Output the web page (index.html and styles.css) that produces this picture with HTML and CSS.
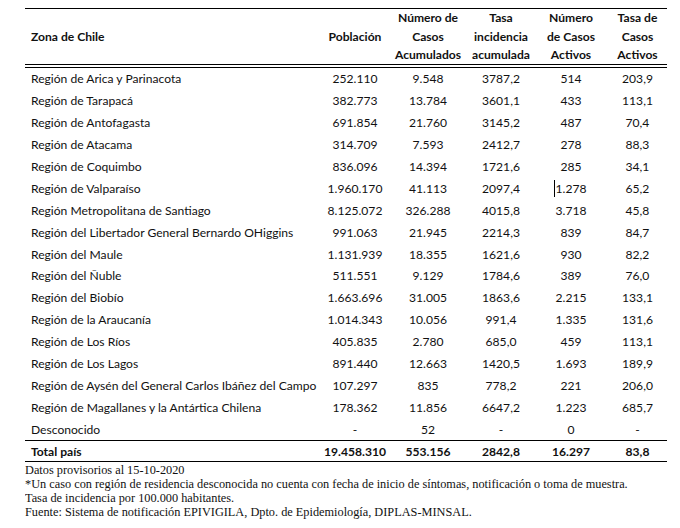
FILE: index.html
```html
<!DOCTYPE html>
<html lang="es">
<head>
<meta charset="utf-8">
<title>Casos por región</title>
<link rel="stylesheet" href="styles.css">
</head>
<body>
<div class="wrap">
  <div class="table">
    <div class="row head">
      <div class="c name">Zona de Chile</div>
      <div class="c">Población</div>
      <div class="c">Número de<br>Casos<br>Acumulados</div>
      <div class="c">Tasa<br>incidencia<br>acumulada</div>
      <div class="c">Número<br>de Casos<br>Activos</div>
      <div class="c">Tasa de<br>Casos<br>Activos</div>
    </div>
    <div class="body">
      <div class="row"><div class="c name">Región de Arica y Parinacota</div><div class="c">252.110</div><div class="c">9.548</div><div class="c">3787,2</div><div class="c">514</div><div class="c">203,9</div></div>
      <div class="row"><div class="c name">Región de Tarapacá</div><div class="c">382.773</div><div class="c">13.784</div><div class="c">3601,1</div><div class="c">433</div><div class="c">113,1</div></div>
      <div class="row"><div class="c name">Región de Antofagasta</div><div class="c">691.854</div><div class="c">21.760</div><div class="c">3145,2</div><div class="c">487</div><div class="c">70,4</div></div>
      <div class="row"><div class="c name">Región de Atacama</div><div class="c">314.709</div><div class="c">7.593</div><div class="c">2412,7</div><div class="c">278</div><div class="c">88,3</div></div>
      <div class="row"><div class="c name">Región de Coquimbo</div><div class="c">836.096</div><div class="c">14.394</div><div class="c">1721,6</div><div class="c">285</div><div class="c">34,1</div></div>
      <div class="row"><div class="c name">Región de Valparaíso</div><div class="c">1.960.170</div><div class="c">41.113</div><div class="c">2097,4</div><div class="c"><span class="caret">1.278</span></div><div class="c">65,2</div></div>
      <div class="row"><div class="c name">Región Metropolitana de Santiago</div><div class="c">8.125.072</div><div class="c">326.288</div><div class="c">4015,8</div><div class="c">3.718</div><div class="c">45,8</div></div>
      <div class="row"><div class="c name">Región del Libertador General Bernardo OHiggins</div><div class="c">991.063</div><div class="c">21.945</div><div class="c">2214,3</div><div class="c">839</div><div class="c">84,7</div></div>
      <div class="row"><div class="c name">Región del Maule</div><div class="c">1.131.939</div><div class="c">18.355</div><div class="c">1621,6</div><div class="c">930</div><div class="c">82,2</div></div>
      <div class="row"><div class="c name">Región del Ñuble</div><div class="c">511.551</div><div class="c">9.129</div><div class="c">1784,6</div><div class="c">389</div><div class="c">76,0</div></div>
      <div class="row"><div class="c name">Región del Biobío</div><div class="c">1.663.696</div><div class="c">31.005</div><div class="c">1863,6</div><div class="c">2.215</div><div class="c">133,1</div></div>
      <div class="row"><div class="c name">Región de la Araucanía</div><div class="c">1.014.343</div><div class="c">10.056</div><div class="c">991,4</div><div class="c">1.335</div><div class="c">131,6</div></div>
      <div class="row"><div class="c name">Región de Los Ríos</div><div class="c">405.835</div><div class="c">2.780</div><div class="c">685,0</div><div class="c">459</div><div class="c">113,1</div></div>
      <div class="row"><div class="c name">Región de Los Lagos</div><div class="c">891.440</div><div class="c">12.663</div><div class="c">1420,5</div><div class="c">1.693</div><div class="c">189,9</div></div>
      <div class="row"><div class="c name">Región de Aysén del General Carlos Ibáñez del Campo</div><div class="c">107.297</div><div class="c">835</div><div class="c">778,2</div><div class="c">221</div><div class="c">206,0</div></div>
      <div class="row"><div class="c name">Región de Magallanes y la Antártica Chilena</div><div class="c">178.362</div><div class="c">11.856</div><div class="c">6647,2</div><div class="c">1.223</div><div class="c">685,7</div></div>
      <div class="row"><div class="c name">Desconocido</div><div class="c">-</div><div class="c">52</div><div class="c">-</div><div class="c">0</div><div class="c">-</div></div>
    </div>
    <div class="row total">
      <div class="c name">Total país</div><div class="c">19.458.310</div><div class="c">553.156</div><div class="c">2842,8</div><div class="c">16.297</div><div class="c">83,8</div>
    </div>
  </div>
  <div class="notes">
    <p>Datos provisorios al 15-10-2020</p>
    <p>*Un caso con región de residencia desconocida no cuenta con fecha de inicio de síntomas, notificación o toma de muestra.</p>
    <p>Tasa de incidencia por 100.000 habitantes.</p>
    <p>Fuente: Sistema de notificación EPIVIGILA, Dpto. de Epidemiología, DIPLAS-MINSAL.</p>
  </div>
</div>
</body>
</html>
```

FILE: styles.css
```css
html, body {
  background: #ffffff;
}
body {
  margin: 8px 0 0 25px;
  color: #111111;
}
.wrap {
  width: 642px;
}
.table {
  font-family: Lato, "Liberation Sans", sans-serif;
  font-size: 12.1px;
  border-top: 1px solid #000;
}
.row {
  display: grid;
  grid-template-columns: 297px 66px 80px 66px 74px 59px;
  align-items: center;
  height: 21.9px;
}
.c {
  text-align: center;
  white-space: nowrap;
}
.c.name {
  text-align: left;
  padding-left: 6px;
}
.c:last-child {
  padding-right: 0;
}
.head {
  height: 59px;
  border-bottom: 4px double #000;
  font-weight: bold;
  line-height: 18.5px;
  padding-bottom: 5px;
  box-sizing: border-box;
}
.body {
  border-bottom: 1px solid #000;
}
.total {
  height: 20px;
  font-weight: bold;
  border-bottom: 1px solid #000;
}
.caret {
  position: relative;
}
.caret::before {
  content: "";
  position: absolute;
  left: -2px;
  top: -1px;
  bottom: -1px;
  width: 1px;
  background: #000;
}
.notes {
  font-family: "Liberation Serif", serif;
  font-size: 12.3px;
  line-height: 14px;
  margin-top: 1px;
}
.notes p {
  margin: 0;
  white-space: nowrap;
}
```
